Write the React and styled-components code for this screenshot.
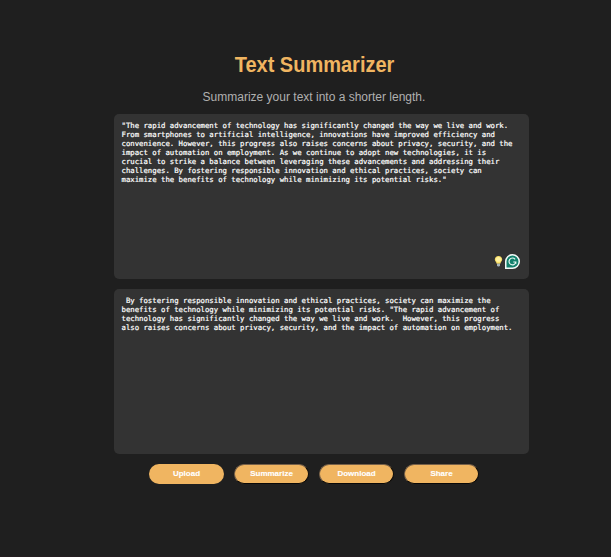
import React from 'react';
import styled, { createGlobalStyle, css } from 'styled-components';

const GlobalStyle = createGlobalStyle`
  *, *::before, *::after { box-sizing: border-box; }
  html, body { margin: 0; background: #1f1f1f; }
  body { font-family: "Liberation Sans", Arial, sans-serif; }
`;

const Page = styled.div`
  min-height: 557px;
  background: #1f1f1f;
  border-bottom: 1px solid #241d20;
  overflow: hidden;
`;

const Container = styled.main`
  width: 400px;
  margin: 53px 0 0 114px;
`;

const Title = styled.h1`
  margin: 0;
  padding-left: 1px;
  font-size: 20px;
  line-height: 24px;
  font-weight: 700;
  color: #f0b561;
  text-align: center;
  transform: scaleY(1.06);
`;

const Subtitle = styled.p`
  margin: 12px 0 9px;
  font-size: 12px;
  line-height: 16px;
  color: #b0b0b0;
  text-align: center;
`;

const TextPanel = styled.section`
  position: relative;
  width: 415px;
  height: 165px;
  margin-bottom: 10px;
  padding: 7px 7.5px;
  border-radius: 5px;
  background: #333;
`;

const PanelText = styled.p`
  margin: 0;
  font-family: "DejaVu Sans Mono", monospace;
  font-size: 7.315px;
  line-height: 9px;
  color: #fff;
  -webkit-text-stroke: 0.2px #fff;
  white-space: pre;
`;

const Assistant = styled.div`
  position: absolute;
  right: 9px;
  bottom: 10px;
  display: flex;
  align-items: center;
  gap: 2px;
`;

const Actions = styled.div`
  display: flex;
  gap: 10px;
  padding-left: 35px;
`;

const ActionButton = styled.button`
  width: 75px;
  height: 20px;
  padding: 0 0 1px;
  border: 0;
  border-radius: 10px;
  background: #f0b561;
  color: #fff;
  font: 700 8px/18px "Liberation Sans", Arial, sans-serif;
  text-align: center;
  -webkit-text-stroke: 0.15px #fff;
  ${({ $raised }) =>
    $raised &&
    css`
      border: 1px solid;
      border-color: #776048 #090807 #090807 #776048;
      line-height: 17px;
    `}
`;

const BulbIcon = () => (
  <svg width="9" height="13" viewBox="0 0 9 13" aria-hidden="true">
    <path d="M4.5 1C2.4 1 .8 2.5.8 4.6c0 1.7 1.6 2.4 1.9 4.2h3.6c.3-1.8 1.9-2.5 1.9-4.2C8.2 2.5 6.6 1 4.5 1Z" fill="#f9df68" />
    <path d="M4.5 2C2.9 2 2 3.1 2 4.4c0 .9.6 1.6 1.1 2.4h2.8c.5-.8 1.1-1.5 1.1-2.4C7 3.1 6.1 2 4.5 2Z" fill="#fff2a0" />
    <path d="M3 8.8h3v1.8l-.8 1H3.8l-.8-1Z" fill="#a6b2b8" />
  </svg>
);

const GrammarIcon = () => (
  <svg width="15" height="15" viewBox="0 0 15 15" aria-hidden="true">
    <path d="M7.5 0A7.5 7.5 0 0 0 0 7.5V15h7.5a7.5 7.5 0 0 0 0-15Z" fill="#f2faf8" />
    <path d="M7.5 1.5a6 6 0 0 0-6 6v6h6a6 6 0 0 0 0-12Z" fill="#12806c" />
    <path d="M10.1 5.3A3.4 3.4 0 1 0 10.8 8H8.3M10.8 8v1.8" fill="none" stroke="#e8faf5" strokeWidth="1.15" />
  </svg>
);

const sourceText = `"The rapid advancement of technology has significantly changed the way we live and work.
From smartphones to artificial intelligence, innovations have improved efficiency and
convenience. However, this progress also raises concerns about privacy, security, and the
impact of automation on employment. As we continue to adopt new technologies, it is
crucial to strike a balance between leveraging these advancements and addressing their
challenges. By fostering responsible innovation and ethical practices, society can
maximize the benefits of technology while minimizing its potential risks."`;

const summaryText = ` By fostering responsible innovation and ethical practices, society can maximize the
benefits of technology while minimizing its potential risks. "The rapid advancement of
technology has significantly changed the way we live and work.  However, this progress
also raises concerns about privacy, security, and the impact of automation on employment.`;

export default function App() {
  return (
    <>
      <GlobalStyle />
      <Page>
        <Container>
          <Title>Text Summarizer</Title>
          <Subtitle>Summarize your text into a shorter length.</Subtitle>
          <TextPanel>
            <PanelText>{sourceText}</PanelText>
            <Assistant>
              <BulbIcon />
              <GrammarIcon />
            </Assistant>
          </TextPanel>
          <TextPanel>
            <PanelText>{summaryText}</PanelText>
          </TextPanel>
          <Actions>
            <ActionButton>Upload</ActionButton>
            <ActionButton $raised>Summarize</ActionButton>
            <ActionButton $raised>Download</ActionButton>
            <ActionButton $raised>Share</ActionButton>
          </Actions>
        </Container>
      </Page>
    </>
  );
}
